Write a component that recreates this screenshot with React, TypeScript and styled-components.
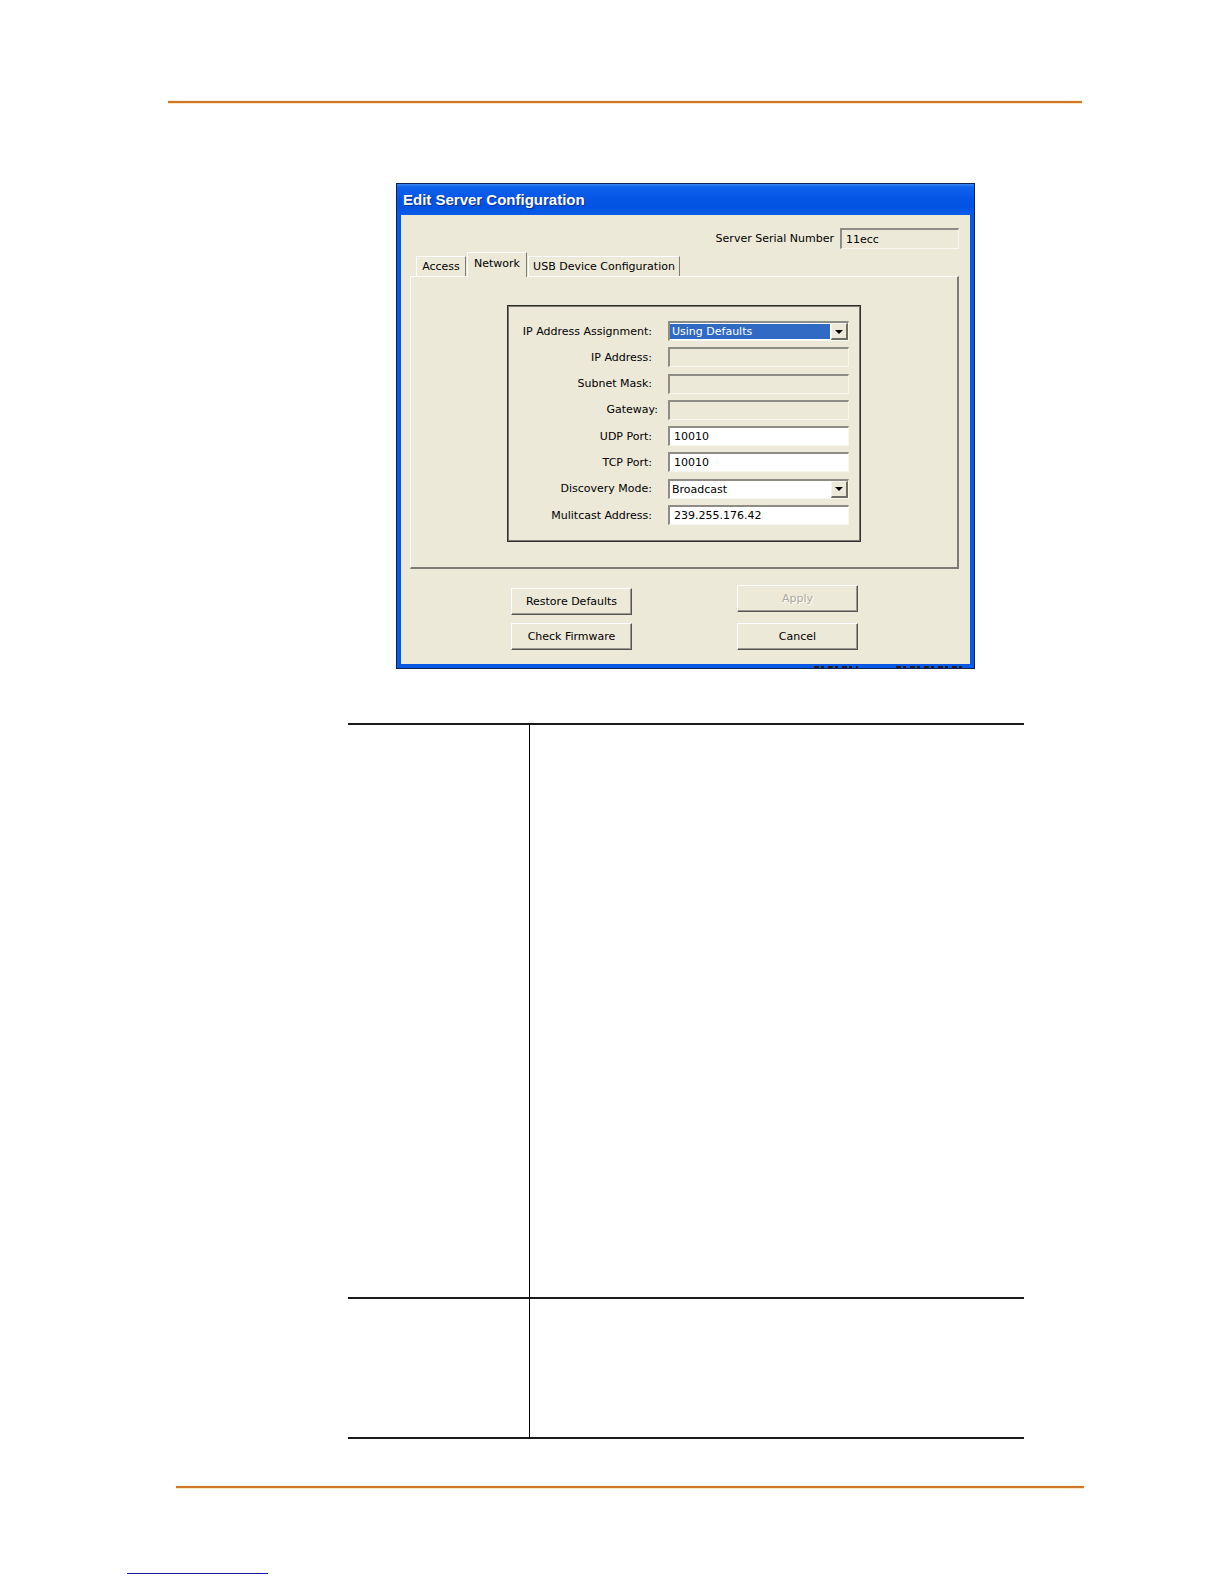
import React from "react";
import styled, { createGlobalStyle } from "styled-components";

const Global = createGlobalStyle`
  html, body { margin: 0; padding: 0; background: #ffffff; }
  body { font-family: "DejaVu Sans", "Liberation Sans", sans-serif; }
  * { box-sizing: border-box; }
`;

const Page = styled.div`
  width: 1224px;
  height: 1584px;
  overflow: hidden;
  display: flex;
  flex-direction: column;
  background: #ffffff;
`;

const OrangeRule = styled.div<{ $top: number; $left: number; $width: number }>`
  margin-top: ${(p) => p.$top}px;
  margin-left: ${(p) => p.$left}px;
  width: ${(p) => p.$width}px;
  height: 2px;
  flex: none;
  background: #cf782b;
  box-shadow: 0 1px 0 #fbe6bf, 0 -1px 0 #fdf1dc;
`;

const Dialog = styled.section`
  margin-top: 80px;
  margin-left: 396px;
  width: 579px;
  flex: none;
  display: flex;
  flex-direction: column;
  border: 1px solid #10224f;
  background: #0858e6;
`;

const TitleBar = styled.header`
  height: 31px;
  display: flex;
  align-items: center;
  padding-left: 6px;
  background: linear-gradient(
    to bottom,
    #3b86f4 0%,
    #0f62ec 10%,
    #0656e6 45%,
    #0253e2 75%,
    #0a5ce9 100%
  );
  color: #ffffff;
  font-family: "Liberation Sans", sans-serif;
  font-weight: bold;
  font-size: 15px;
  text-shadow: 1px 1px 0 #0b2f8f;
`;

const Body = styled.div`
  margin: 0 4px;
  background: #ece9d8;
  padding: 13px 11px 14px 9px;
  display: flex;
  flex-direction: column;
  font-size: 11px;
  color: #000;
`;

const BottomEdge = styled.div`
  height: 4px;
  display: flex;
  justify-content: flex-end;
  align-items: flex-end;
  gap: 38px;
  padding-right: 8px;
`;

const Smudge = styled.div<{ $w: number }>`
  width: ${(p) => p.$w}px;
  height: 2px;
  background: repeating-linear-gradient(
    to right,
    #1b1b2a 0 5px,
    transparent 5px 7px,
    #1b1b2a 7px 10px,
    transparent 10px 14px
  );
`;

const SerialRow = styled.div`
  height: 21px;
  display: flex;
  justify-content: flex-end;
  align-items: center;
  gap: 6px;
`;

const Label = styled.span<{ $nudge?: number }>`
  white-space: nowrap;
  text-align: right;
  margin-right: ${(p) => -(p.$nudge || 0)}px;
`;

const Field = styled.div<{ $w?: number; $enabled?: boolean }>`
  width: ${(p) => (p.$w ? `${p.$w}px` : "100%")};
  height: ${(p) => (p.$w ? 21 : 20)}px;
  border-style: solid;
  border-width: 2px 1px 1px 2px;
  border-color: #8d8d86 #f7f6ef #f7f6ef #8d8d86;
  background: ${(p) => (p.$enabled ? "#ffffff" : "#ece9d8")};
  padding-left: 4px;
  display: flex;
  align-items: center;
  white-space: nowrap;
`;

const Combo = styled.div`
  width: 100%;
  height: 20px;
  border-style: solid;
  border-width: 2px 1px 1px 2px;
  border-color: #8d8d86 #f7f6ef #f7f6ef #8d8d86;
  background: #ffffff;
  display: flex;
  align-items: stretch;
`;

const ComboText = styled.div<{ $selected?: boolean }>`
  flex: 1;
  margin: ${(p) => (p.$selected ? "1px 1px 1px 0" : "0")};
  padding-left: 2px;
  display: flex;
  align-items: center;
  background: ${(p) => (p.$selected ? "#316ac5" : "transparent")};
  color: ${(p) => (p.$selected ? "#ffffff" : "#000000")};
`;

const ComboButton = styled.div`
  width: 17px;
  background: #ece9d8;
  border-style: solid;
  border-width: 1px 2px 2px 1px;
  border-color: #f5f4ee #6e6d66 #6e6d66 #f5f4ee;
  display: flex;
  align-items: center;
  justify-content: center;
`;

const Arrow = styled.span`
  width: 0;
  height: 0;
  border-left: 4px solid transparent;
  border-right: 4px solid transparent;
  border-top: 4px solid #000;
  margin-top: 1px;
`;

const TabStrip = styled.div`
  margin-top: 3px;
  height: 24px;
  display: flex;
  align-items: flex-end;
  gap: 1px;
  padding-left: 6px;
`;

const Tab = styled.div<{ $w: number; $active?: boolean }>`
  width: ${(p) => p.$w}px;
  height: ${(p) => (p.$active ? 25 : 20)}px;
  margin-bottom: ${(p) => (p.$active ? -1 : 0)}px;
  padding-bottom: ${(p) => (p.$active ? 3 : 0)}px;
  display: flex;
  align-items: center;
  justify-content: center;
  background: #ece9d8;
  border-top: 1px solid #ffffff;
  border-left: 1px solid #ffffff;
  border-right: 1px solid #7d7c74;
  position: relative;
  z-index: ${(p) => (p.$active ? 2 : 1)};
  white-space: nowrap;
`;

const Panel = styled.div`
  height: 293px;
  border-style: solid;
  border-width: 1px 2px 2px 1px;
  border-color: #ffffff #7d7c74 #7d7c74 #ffffff;
  display: flex;
  justify-content: center;
  padding-top: 28px;
`;

const Group = styled.div`
  width: 354px;
  height: 237px;
  border: 1px solid #2f2f2f;
  box-shadow: inset 0 0 0 1px #7a7a72;
  padding: 15px 11px 0 0;
  display: grid;
  grid-template-columns: 1fr 181px;
  grid-auto-rows: 20px;
  column-gap: 16px;
  row-gap: 6.3px;
  align-content: start;
`;

const RowLabel = styled(Label)`
  display: flex;
  align-items: center;
  justify-content: flex-end;
`;

const Buttons = styled.div`
  display: flex;
  padding-left: 101px;
  gap: 105px;
`;

const ButtonCol = styled.div<{ $top: number; $gap: number }>`
  display: flex;
  flex-direction: column;
  margin-top: ${(p) => p.$top}px;
  gap: ${(p) => p.$gap}px;
`;

const Btn = styled.button<{ $off?: boolean }>`
  width: 121px;
  height: 27px;
  padding: 0;
  background: #ece9d8;
  font-family: "DejaVu Sans", sans-serif;
  font-size: 11px;
  color: ${(p) => (p.$off ? "#aca899" : "#000000")};
  text-shadow: ${(p) => (p.$off ? "1px 1px 0 #ffffff" : "none")};
  border-style: solid;
  border-width: 1px;
  border-color: #ffffff #55544e #55544e #ffffff;
  box-shadow: inset -1px -1px 0 #9b9a92;
`;

const Table = styled.div`
  margin-top: 54px;
  margin-left: 348px;
  width: 676px;
  flex: none;
  display: grid;
  grid-template-columns: 182px 1fr;
  grid-template-rows: 574px 140px;
  border-top: 2px solid #1a1a1a;
`;

const Cell = styled.div<{ $first?: boolean }>`
  border-bottom: 2px solid #1a1a1a;
  border-right: ${(p) => (p.$first ? "1px solid #000" : "none")};
`;

const LinkLine = styled.div`
  margin-top: 85px;
  margin-left: 127px;
  width: 141px;
  height: 1px;
  flex: none;
  background: #1c1ca6;
`;

type Row =
  | { label: string; kind: "combo"; value: string; selected?: boolean; nudge?: number }
  | { label: string; kind: "field"; value: string; enabled: boolean; nudge?: number };

const rows: Row[] = [
  { label: "IP Address Assignment:", kind: "combo", value: "Using Defaults", selected: true },
  { label: "IP Address:", kind: "field", value: "", enabled: false },
  { label: "Subnet Mask:", kind: "field", value: "", enabled: false },
  { label: "Gateway:", kind: "field", value: "", enabled: false, nudge: 6 },
  { label: "UDP Port:", kind: "field", value: "10010", enabled: true },
  { label: "TCP Port:", kind: "field", value: "10010", enabled: true },
  { label: "Discovery Mode:", kind: "combo", value: "Broadcast" },
  { label: "Mulitcast Address:", kind: "field", value: "239.255.176.42", enabled: true },
];

export default function App() {
  return (
    <Page>
      <Global />
      <OrangeRule $top={101} $left={168} $width={914} />
      <Dialog>
        <TitleBar>Edit Server Configuration</TitleBar>
        <Body>
          <SerialRow>
            <Label>Server Serial Number</Label>
            <Field $w={119}>11ecc</Field>
          </SerialRow>
          <TabStrip>
            <Tab $w={50}>Access</Tab>
            <Tab $w={60} $active>
              Network
            </Tab>
            <Tab $w={152}>USB Device Configuration</Tab>
          </TabStrip>
          <Panel>
            <Group>
              {rows.map((r) => (
                <React.Fragment key={r.label}>
                  <RowLabel $nudge={r.nudge}>{r.label}</RowLabel>
                  {r.kind === "combo" ? (
                    <Combo>
                      <ComboText $selected={r.selected}>{r.value}</ComboText>
                      <ComboButton>
                        <Arrow />
                      </ComboButton>
                    </Combo>
                  ) : (
                    <Field $enabled={r.enabled}>{r.value}</Field>
                  )}
                </React.Fragment>
              ))}
            </Group>
          </Panel>
          <Buttons>
            <ButtonCol $top={19} $gap={8}>
              <Btn>Restore Defaults</Btn>
              <Btn>Check Firmware</Btn>
            </ButtonCol>
            <ButtonCol $top={16} $gap={11}>
              <Btn $off disabled>
                Apply
              </Btn>
              <Btn>Cancel</Btn>
            </ButtonCol>
          </Buttons>
        </Body>
        <BottomEdge>
          <Smudge $w={44} />
          <Smudge $w={70} />
        </BottomEdge>
      </Dialog>
      <Table>
        <Cell $first />
        <Cell />
        <Cell $first />
        <Cell />
      </Table>
      <OrangeRule $top={47} $left={176} $width={908} />
      <LinkLine />
    </Page>
  );
}
